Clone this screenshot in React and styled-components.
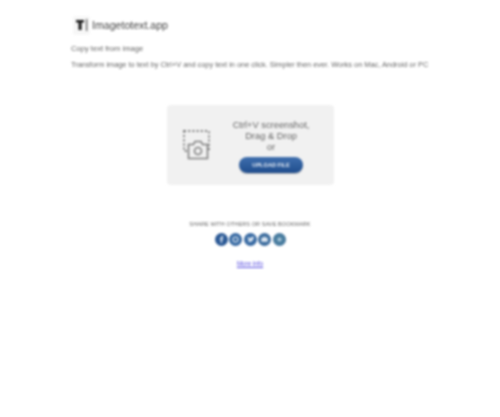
import React from "react";
import styled, { createGlobalStyle } from "styled-components";

const Global = createGlobalStyle`
  html, body { margin: 0; padding: 0; background: #fff; }
  body { font-family: "Liberation Sans", Arial, sans-serif; }
`;

const Page = styled.div`
  width: 500px;
  height: 417px;
  overflow: hidden;
  box-sizing: border-box;
  display: flex;
  flex-direction: column;
  filter: blur(0.8px);
`;

const Header = styled.header`
  display: flex;
  flex-direction: column;
  padding: 15px 0 0 71px;
`;

const Brand = styled.div`
  display: flex;
  align-items: center;
  gap: 2px;
  height: 20px;
  margin-left: 2px;
`;

const LogoBox = styled.div`
  width: 17px;
  height: 19px;
  background: #f7f7f7;
  border-radius: 2px;
  display: flex;
  align-items: center;
  justify-content: center;
`;

const BrandName = styled.span`
  font-size: 10.6px;
  color: #444;
  line-height: 20px;
`;

const Tagline = styled.p`
  margin: 9px 0 0;
  font-size: 7.6px;
  line-height: 9px;
  color: #666;
`;

const Lead = styled.p`
  margin: 7px 0 0;
  font-size: 7.38px;
  line-height: 9px;
  color: #666;
  white-space: nowrap;
`;

const Card = styled.section`
  align-self: flex-start;
  margin: 36px 0 0 167px;
  width: 167px;
  height: 80px;
  background: #f1f1f1;
  border-radius: 4px;
  display: flex;
  box-sizing: border-box;
  padding: 15px 0 0 16px;
`;

const IconSlot = styled.div`
  padding-top: 10px;
  width: 50px;
`;

const Prompt = styled.div`
  display: flex;
  flex-direction: column;
  align-items: center;
  width: 76px;
`;

const PromptLine = styled.span`
  font-size: 9.3px;
  line-height: 11px;
  color: #666;
  white-space: nowrap;
`;

const UploadButton = styled.button`
  margin-top: 4px;
  width: 64px;
  height: 16px;
  border: none;
  border-radius: 8px;
  padding: 0;
  background: linear-gradient(#3f6fae, #1f4d8d);
  box-shadow: 0 1px 1px rgba(0,0,0,.25);
  color: #e8eef6;
  font: bold 5.6px "Liberation Sans", Arial, sans-serif;
`;

const Share = styled.section`
  display: flex;
  flex-direction: column;
  align-items: center;
  margin-top: 35px;
`;

const ShareTitle = styled.div`
  font-size: 5.5px;
  line-height: 8px;
  color: #666;
  letter-spacing: 0.1px;
  text-transform: uppercase;
`;

const Socials = styled.div`
  display: flex;
  gap: 1.5px;
  margin-top: 5px;
`;

const Social = styled.span`
  width: 13px;
  height: 13px;
  border-radius: 50%;
  background: radial-gradient(circle, ${(p) => p.$color} 55%, #1f4d8d 100%);
  display: flex;
  align-items: center;
  justify-content: center;
`;

const MoreInfo = styled.a`
  margin-top: 14px;
  font-size: 6.3px;
  line-height: 8px;
  color: #5a50e0;
  text-decoration: underline;
`;

const Glyph = ({ children }) => (
  <svg width="9" height="9" viewBox="0 0 10 10" fill="#dfe8f2">{children}</svg>
);

const socials = [
  { color: "#2c5a96", icon: <path d="M5.6 9V5.4h1.2l.2-1.4H5.6v-.8c0-.4.1-.7.7-.7H7V1.2C6.8 1.1 6.4 1.1 6 1.1c-1.1 0-1.8.7-1.800 1.900V4H3v1.400h1.200V9z" /> },
  { color: "#3a6ca4", icon: <circle cx="5" cy="5" r="2.800" fill="none" stroke="#dfe8f2" strokeWidth="1.200" /> },
  { color: "#3a6ca4", icon: <path d="M9 2.500c-.3.1-.6.2-.9.2.3-.2.6-.5.7-.9-.3.2-.6.3-1 .4C7.200 1.600 5.400 2 5.500 3.600 4.100 3.500 3 2.900 2.200 1.900c-.4.700-.2 1.600.5 2.100-.3 0-.5-.1-.7-.2 0 .8.500 1.400 1.300 1.600-.2.100-.5.100-.7 0 .2.600.8 1.100 1.500 1.100-.7.500-1.500.8-2.400.7 2.600 1.600 6.300.2 6.500-3.500.4-.2.700-.5.800-.8z" /> },
  { color: "#3f6f9f", icon: <path d="M1.500 3h7v4.500h-7zM3.500 3l.7-1h1.600l.7 1z" /> },
  { color: "#4a7ea0", icon: <circle cx="5" cy="5" r="2.300" fill="#a9c6d8" /> },
];

export default function App() {
  return (
    <Page>
      <Global />
      <Header>
        <Brand>
          <LogoBox>
            <svg width="14" height="14" viewBox="0 0 14 14">
              <path d="M1 2h8v2.500H6.600V12H3.500V4.500H1z" fill="#1c1c1c" />
              <rect x="11" y="1" width="1.200" height="12" fill="#555" />
            </svg>
          </LogoBox>
          <BrandName>Imagetotext.app</BrandName>
        </Brand>
        <Tagline>Copy text from image</Tagline>
        <Lead>Transform image to text by Ctrl+V and copy text in one click. Simpler then ever. Works on Mac, Android or PC</Lead>
      </Header>
      <Card>
        <IconSlot>
          <svg width="30" height="31" viewBox="0 0 30 31" fill="none">
            <rect x="1" y="1" width="25" height="20" stroke="#7d7d7d" strokeWidth="1.800" strokeDasharray="2 2.200" />
            <path d="M5.500 14.500h5l1.500-3h6l1.500 3h5v14h-19z" fill="#f1f1f1" stroke="#808080" strokeWidth="1.600" />
            <circle cx="15" cy="21" r="3.500" stroke="#808080" strokeWidth="1.600" />
          </svg>
        </IconSlot>
        <Prompt>
          <PromptLine>Ctrl+V screenshot,</PromptLine>
          <PromptLine>Drag &amp; Drop</PromptLine>
          <PromptLine>or</PromptLine>
          <UploadButton>UPLOAD FILE</UploadButton>
        </Prompt>
      </Card>
      <Share>
        <ShareTitle>Share with others or save bookmark</ShareTitle>
        <Socials>
          {socials.map((s, i) => (
            <Social key={i} $color={s.color}><Glyph>{s.icon}</Glyph></Social>
          ))}
        </Socials>
        <MoreInfo href="#">More info</MoreInfo>
      </Share>
    </Page>
  );
}
